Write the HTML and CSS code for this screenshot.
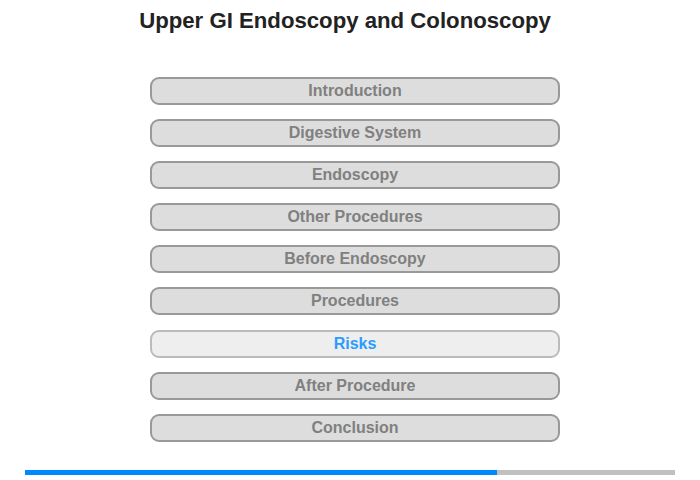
FILE: index.html
```html
<!DOCTYPE html>
<html>
<head>
<meta charset="utf-8">
<link rel="stylesheet" href="styles.css">
</head>
<body>
<div class="page">
  <h1 class="title">Upper GI Endoscopy and Colonoscopy</h1>
  <nav class="menu">
    <div class="item">Introduction</div>
    <div class="item">Digestive System</div>
    <div class="item">Endoscopy</div>
    <div class="item">Other Procedures</div>
    <div class="item">Before Endoscopy</div>
    <div class="item">Procedures</div>
    <div class="item active">Risks</div>
    <div class="item">After Procedure</div>
    <div class="item">Conclusion</div>
  </nav>
  <div class="progress"><div class="fill" style="width:472px"></div></div>
</div>
</body>
</html>
```
FILE: styles.css
```css
html, body {
  margin: 0;
  padding: 0;
  background: #fff;
}
.page {
  width: 700px;
  height: 480px;
  font-family: "Liberation Sans", Arial, sans-serif;
}
.title {
  margin: 0;
  padding: 8px 10px 0 0;
  height: 77px;
  box-sizing: border-box;
  font-size: 22.2px;
  line-height: 26px;
  font-weight: bold;
  color: #222;
  text-align: center;
}
.menu {
  margin-left: 150px;
  width: 410px;
  display: flex;
  flex-direction: column;
  gap: 14.1px;
}
.item {
  box-sizing: border-box;
  height: 28px;
  border: 2px solid #999;
  border-radius: 9px;
  background: #ddd;
  color: #808080;
  font-size: 16px;
  font-weight: bold;
  line-height: 24px;
  text-align: center;
}
.item.active {
  background: #eee;
  border-color: #bbb;
  color: #2b9bff;
}
.progress {
  margin: 28px 0 0 25px;
  width: 650px;
  height: 5px;
  background: #c0c0c0;
}
.fill {
  height: 100%;
  background: #0088ff;
}
```
